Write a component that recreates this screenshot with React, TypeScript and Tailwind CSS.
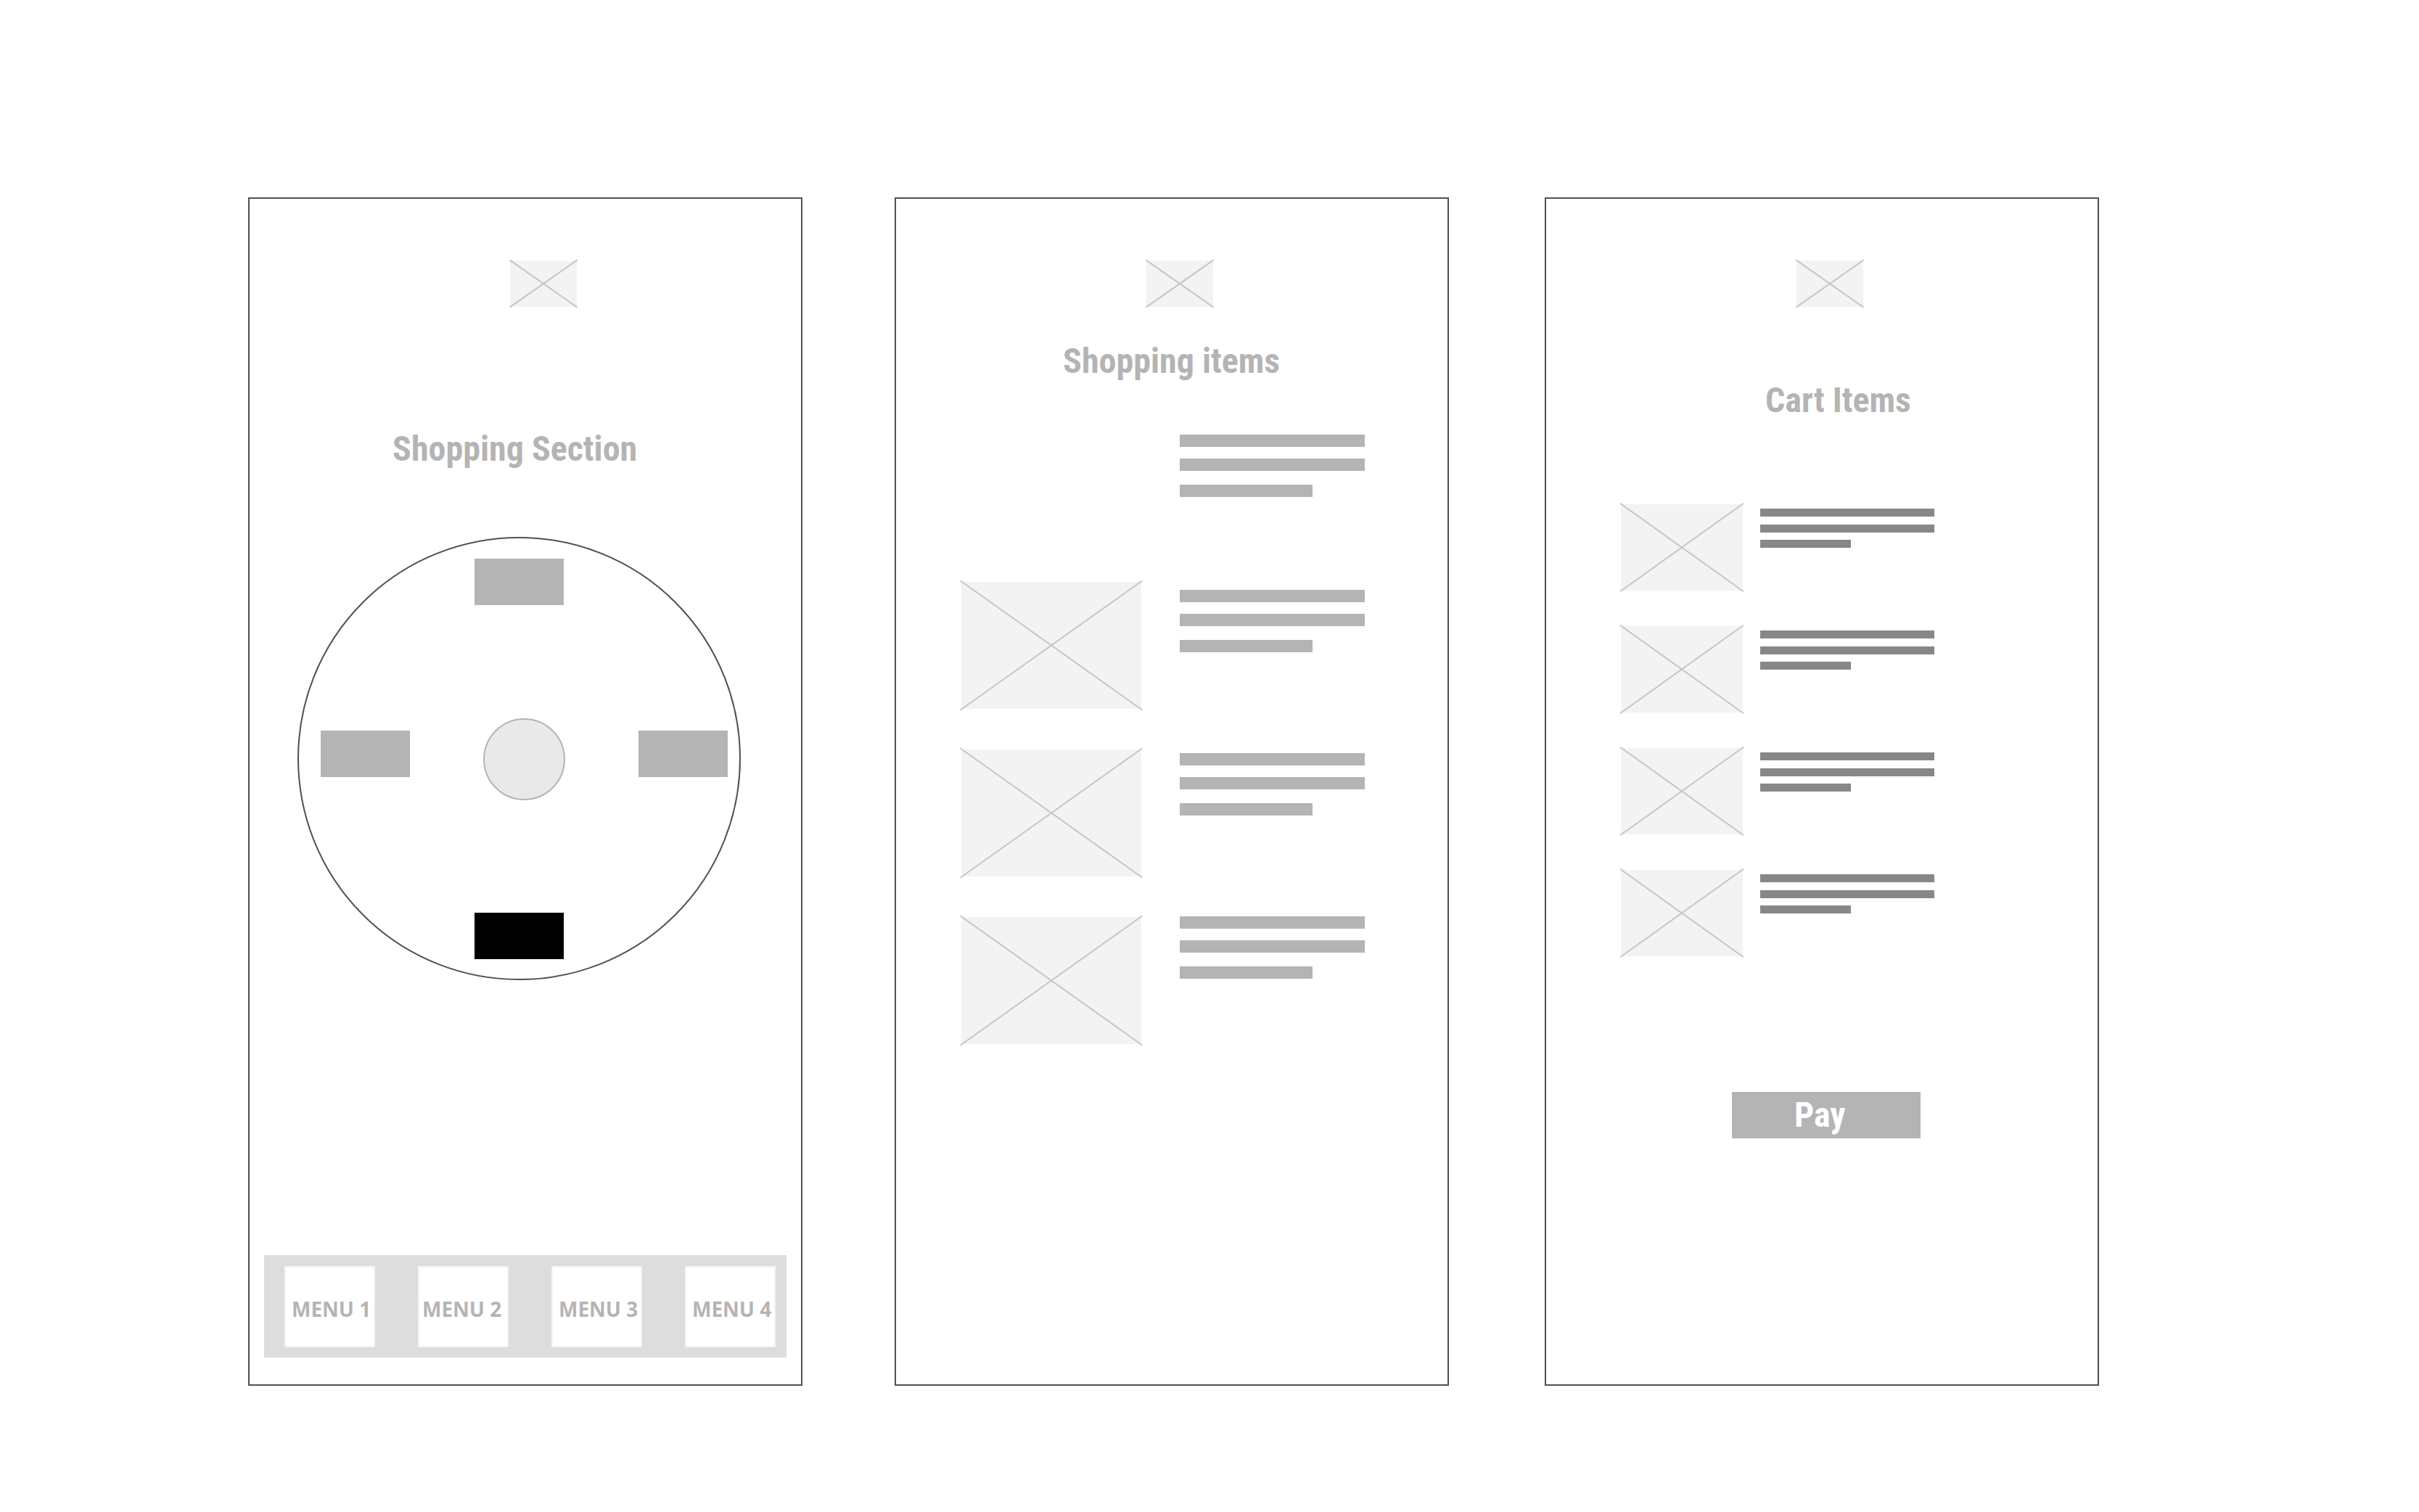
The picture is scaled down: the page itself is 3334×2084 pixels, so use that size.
const titleFont = "font-['Roboto_Condensed','Liberation_Sans',sans-serif] text-[48px] leading-[56px] font-bold whitespace-nowrap";

function Placeholder({ className }: { className: string }) {
  return (
    <svg
      viewBox="0 0 100 100"
      preserveAspectRatio="none"
      aria-hidden="true"
      className={`block shrink-0 overflow-visible ${className}`}
    >
      <rect width="100" height="100" fill="#f3f3f3" />
      <path
        d="M-0.6 -1L100.6 101M100.6 -1L-0.6 101"
        stroke="#c6c6c6"
        strokeWidth="2"
        fill="none"
        vectorEffect="non-scaling-stroke"
      />
    </svg>
  );
}

function Screen({ className, children }: { className: string; children: React.ReactNode }) {
  return (
    <section
      className={`flex min-h-[1638px] min-w-0 flex-1 flex-col items-start border-2 border-[#505055] pt-[85px] ${className}`}
    >
      {children}
    </section>
  );
}

function ItemText() {
  return (
    <div className="flex flex-col">
      <div className="h-[17px] w-[255px] bg-[#b4b4b4]" />
      <div className="mt-4 h-[17px] w-[255px] bg-[#b4b4b4]" />
      <div className="mt-[19px] h-[17px] w-[183px] bg-[#b4b4b4]" />
    </div>
  );
}

function CartRow() {
  return (
    <li className="flex gap-6">
      <Placeholder className="h-[119px] w-[168px]" />
      <div className="flex flex-col pt-[6px]">
        <div className="h-[11px] w-60 bg-[#878787]" />
        <div className="mt-[11px] h-[11px] w-60 bg-[#878787]" />
        <div className="mt-[10px] h-[11px] w-[125px] bg-[#878787]" />
      </div>
    </li>
  );
}

const menus = [
  { label: "MENU 1", pad: "pl-2" },
  { label: "MENU 2", pad: "pl-1" },
  { label: "MENU 3", pad: "pl-2" },
  { label: "MENU 4", pad: "pl-2" },
];

export default function App() {
  return (
    <main className="flex min-h-screen items-start bg-white pt-[272px] pr-[441px] pl-[342px]">
      <Screen className="pb-[37px]">
        <Placeholder className="ml-[359px] h-16 w-[92px]" />
        <h1 className={`mt-[168px] ml-[197px] text-[#b4b4b4] ${titleFont}`}>Shopping Section</h1>
        <div className="mt-[93px] ml-[66px] flex h-[611px] w-[611px] flex-col justify-between rounded-full border-2 border-[#505055] pt-7 pr-4 pb-[27px] pl-[30px]">
          <button type="button" aria-label="Top section" className="mr-[14px] h-16 w-[123px] self-center bg-[#b4b4b4]" />
          <div className="flex items-start justify-between">
            <button type="button" aria-label="Left section" className="mt-[17px] h-16 w-[123px] bg-[#b4b4b4]" />
            <button type="button" aria-label="Centre" className="h-[113px] w-[113px] rounded-full border-2 border-[#b4b4b4] bg-[#e9e9e9]" />
            <button type="button" aria-label="Right section" className="mt-[17px] h-16 w-[123px] bg-[#b4b4b4]" />
          </div>
          <button type="button" aria-label="Bottom section" className="mr-[14px] h-16 w-[123px] self-center bg-black" />
        </div>
        <nav className="mx-5 mt-auto flex justify-between self-stretch bg-[#dddddd] pt-[15px] pr-[15px] pb-[14px] pl-7">
          {menus.map((m) => (
            <button
              key={m.label}
              type="button"
              className={`flex h-28 w-[125px] items-center border-2 border-[#f3f3f3] bg-white pt-[6px] text-left font-['Open_Sans',sans-serif] text-[28px] leading-9 font-bold whitespace-nowrap text-[#b4b4b4] ${m.pad}`}
            >
              {m.label}
            </button>
          ))}
        </nav>
      </Screen>

      <Screen className="ml-[127px]">
        <Placeholder className="ml-[345px] h-16 w-[92px]" />
        <h1 className={`mt-[47px] ml-[230px] text-[#b4b4b4] ${titleFont}`}>Shopping items</h1>
        <div className="mt-[73px] ml-[90px] flex gap-[53px]">
          <div className="flex flex-col gap-14 pt-[203px]">
            <Placeholder className="h-[175px] w-[248px]" />
            <Placeholder className="h-[175px] w-[248px]" />
            <Placeholder className="h-[175px] w-[248px]" />
          </div>
          <div className="flex flex-col">
            <ItemText />
            <div className="mt-32 flex flex-col gap-[139px]">
              <ItemText />
              <ItemText />
              <ItemText />
            </div>
          </div>
        </div>
      </Screen>

      <Screen className="ml-[132px]">
        <Placeholder className="ml-[345px] h-16 w-[92px]" />
        <h1 className={`mt-[101px] ml-[302px] text-[#b4b4b4] ${titleFont}`}>Cart Items</h1>
        <ul className="mt-[115px] ml-[103px] flex flex-col gap-[49px]">
          <CartRow />
          <CartRow />
          <CartRow />
          <CartRow />
        </ul>
        <button
          type="button"
          className={`mt-[187px] ml-[256px] h-16 w-[260px] bg-[#b4b4b4] pl-[86px] text-left text-white ${titleFont}`}
        >
          Pay
        </button>
      </Screen>
    </main>
  );
}
